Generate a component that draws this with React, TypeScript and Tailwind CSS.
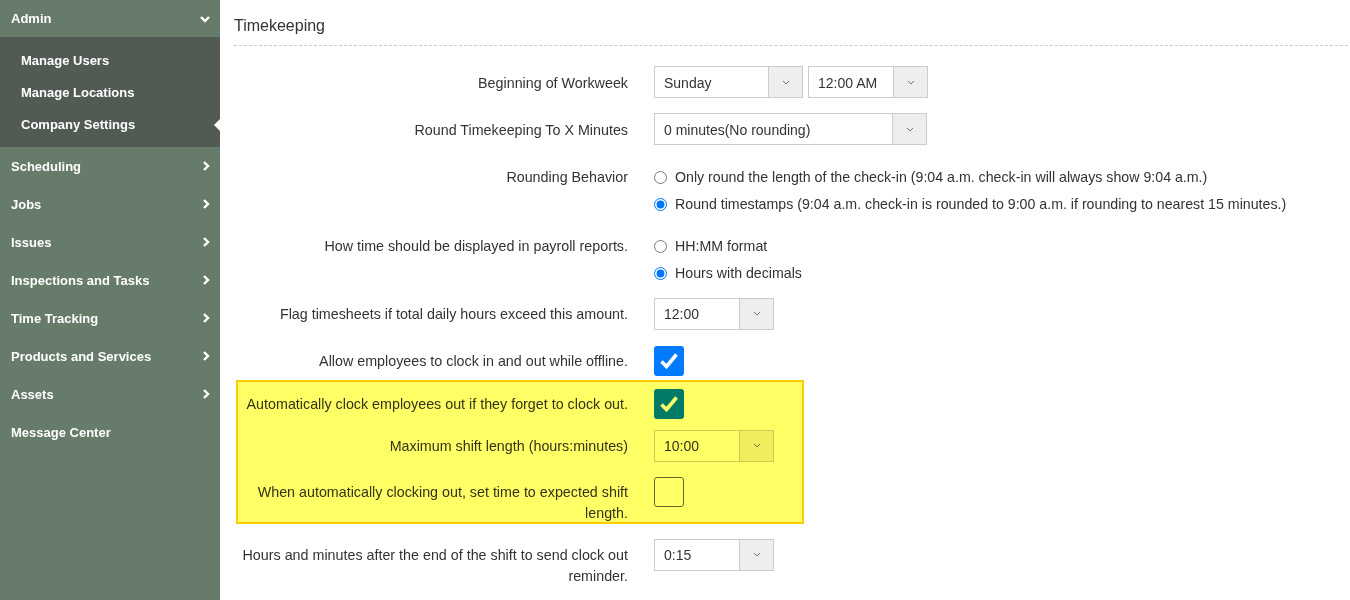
import React from "react";

const FONT = { fontFamily: '"Liberation Sans", Arial, sans-serif' };

const NAV = [
  "Scheduling",
  "Jobs",
  "Issues",
  "Inspections and Tasks",
  "Time Tracking",
  "Products and Services",
  "Assets",
];

function ChevronRight() {
  return (
    <svg width="8" height="12" viewBox="0 0 8 12" className="shrink-0">
      <path d="M2 2l4 4-4 4" fill="none" stroke="white" strokeWidth="2.4" />
    </svg>
  );
}

function ChevronDown() {
  return (
    <svg width="12" height="8" viewBox="0 0 12 8" className="shrink-0">
      <path d="M2 2l4 4 4-4" fill="none" stroke="white" strokeWidth="2.4" />
    </svg>
  );
}

function Sidebar() {
  return (
    <aside className="flex w-[220px] shrink-0 flex-col bg-[#667b69] text-[13px] font-bold text-white">
      <div className="flex h-[37px] items-center justify-between pl-[11px] pr-[9px]">
        <span className="pt-[1px]">Admin</span>
        <ChevronDown />
      </div>
      <div className="flex flex-col bg-[#525a54] py-[7px]">
        {["Manage Users", "Manage Locations", "Company Settings"].map((item, i) => (
          <div key={item} className="relative flex h-[32px] items-center pl-[21px] pt-[2px]">
            {item}
            {i === 2 && (
              <span className="absolute right-0 top-[11px] h-0 w-0 border-y-[6px] border-r-[6px] border-y-transparent border-r-white" />
            )}
          </div>
        ))}
      </div>
      {NAV.map((item) => (
        <div key={item} className="flex h-[38px] items-center justify-between pl-[11px] pr-[10px]">
          <span className="pt-[2px]">{item}</span>
          <ChevronRight />
        </div>
      ))}
      <div className="flex h-[38px] items-center pl-[11px] pt-[2px]">Message Center</div>
    </aside>
  );
}

function Select({ value, width }: { value: string; width: string }) {
  return (
    <div className={`flex h-[32px] ${width} border border-[#ccc] bg-white`}>
      <div className="flex flex-1 items-center pl-[9px] pt-[2px] text-[14px] text-[#333]">{value}</div>
      <div className="flex w-[34px] items-center justify-center border-l border-[#ccc] bg-[#eee]">
        <svg width="8" height="5" viewBox="0 0 8 5">
          <path d="M1 1l3 3 3-3" fill="none" stroke="#777" strokeWidth="1" />
        </svg>
      </div>
    </div>
  );
}

function Checkbox({ checked }: { checked: boolean }) {
  if (!checked)
    return <div className="h-[30px] w-[30px] rounded-[3px] border border-[#666] bg-white" />;
  return (
    <div className="flex h-[30px] w-[30px] items-center justify-center rounded-[3px] bg-[#007bff]">
      <svg width="20" height="18" viewBox="0 0 20 18">
        <path d="M2.5 9.5l5 5L17.5 2.5" fill="none" stroke="white" strokeWidth="3.6" />
      </svg>
    </div>
  );
}

function Radio({ label, checked }: { label: string; checked?: boolean }) {
  return (
    <label className="flex h-[27px] items-center gap-[8px] text-[14.2px] text-[#333]">
      <input type="radio" defaultChecked={checked} name={label} className="m-0 h-[13px] w-[13px]" />
      <span className="pt-[1px]">{label}</span>
    </label>
  );
}

function Row({
  label,
  mt,
  pad,
  children,
}: {
  label: string;
  mt: string;
  pad: string;
  children: React.ReactNode;
}) {
  return (
    <div className={`flex ${mt}`}>
      <div className={`w-[394px] shrink-0 text-right text-[14.3px] leading-[21px] text-[#333] ${pad}`}>
        {label}
      </div>
      <div className="ml-[26px]">{children}</div>
    </div>
  );
}

export default function App() {
  return (
    <div className="flex min-h-screen bg-white" style={FONT}>
      <Sidebar />
      <main className="relative flex-1 pl-[14px] pr-[2px]">
        <div className="flex h-[46px] items-end border-b border-dashed border-[#ccc] pb-[7px] text-[16px] text-[#333]">
          Timekeeping
        </div>
        <div className="flex flex-col">
          <Row label="Beginning of Workweek" mt="mt-[20px]" pad="pt-[6.5px]">
            <div className="flex gap-[5px]">
              <Select value="Sunday" width="w-[149px]" />
              <Select value="12:00 AM" width="w-[120px]" />
            </div>
          </Row>
          <Row label="Round Timekeeping To X Minutes" mt="mt-[15px]" pad="pt-[6.5px]">
            <Select value="0 minutes(No rounding)" width="w-[273px]" />
          </Row>
          <Row label="Rounding Behavior" mt="mt-[18.5px]" pad="pt-[3.5px]">
            <div className="flex flex-col">
              <Radio label="Only round the length of the check-in (9:04 a.m. check-in will always show 9:04 a.m.)" />
              <Radio
                label="Round timestamps (9:04 a.m. check-in is rounded to 9:00 a.m. if rounding to nearest 15 minutes.)"
                checked
              />
            </div>
          </Row>
          <Row label="How time should be displayed in payroll reports." mt="mt-[15px]" pad="pt-[3.5px]">
            <div className="flex flex-col">
              <Radio label="HH:MM format" />
              <Radio label="Hours with decimals" checked />
            </div>
          </Row>
          <Row label="Flag timesheets if total daily hours exceed this amount." mt="mt-[11px]" pad="pt-[6.5px]">
            <Select value="12:00" width="w-[120px]" />
          </Row>
          <Row label="Allow employees to clock in and out while offline." mt="mt-[16px]" pad="pt-[5.5px]">
            <Checkbox checked />
          </Row>
          <Row label="Automatically clock employees out if they forget to clock out." mt="mt-[13px]" pad="pt-[5.5px]">
            <Checkbox checked />
          </Row>
          <Row label="Maximum shift length (hours:minutes)" mt="mt-[11px]" pad="pt-[6.5px]">
            <Select value="10:00" width="w-[120px]" />
          </Row>
          <Row
            label="When automatically clocking out, set time to expected shift length."
            mt="mt-[15px]"
            pad="pt-[5.5px]"
          >
            <Checkbox checked={false} />
          </Row>
          <Row
            label="Hours and minutes after the end of the shift to send clock out reminder."
            mt="mt-[14.5px]"
            pad="pt-[6.5px]"
          >
            <Select value="0:15" width="w-[120px]" />
          </Row>
        </div>
        <div className="pointer-events-none absolute left-[16px] top-[380px] h-[144px] w-[568px] border-2 border-[#ffcc00] bg-[#ffff66] mix-blend-multiply" />
      </main>
    </div>
  );
}
